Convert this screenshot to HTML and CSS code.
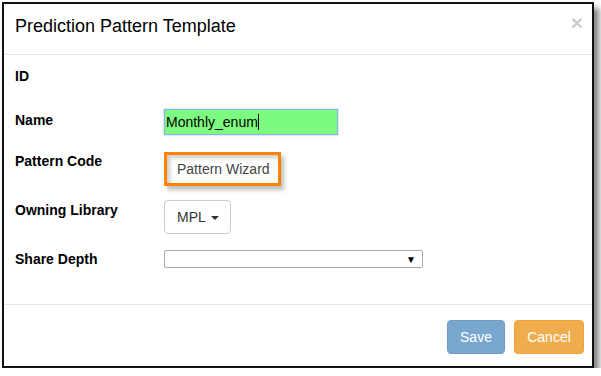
FILE: index.html
```html
<!DOCTYPE html>
<html lang="en">
<head>
    <meta charset="UTF-8">
    <title>Prediction Pattern Template</title>
    <link rel="stylesheet" href="styles.css">
</head>
<body>
    <div class="modal">
        <div class="modal-header">
            <h4 class="modal-title">Prediction Pattern Template</h4>
            <span class="close">&times;</span>
        </div>
        <div class="modal-body">
            <div class="form-row row-id">
                <label>ID</label>
            </div>
            <div class="form-row row-name">
                <label>Name</label>
                <div class="name-input">Monthly_enum<span class="caret-line"></span></div>
            </div>
            <div class="form-row row-code">
                <label>Pattern Code</label>
                <button class="wizard-btn">Pattern Wizard</button>
            </div>
            <div class="form-row row-lib">
                <label>Owning Library</label>
                <button class="lib-btn">MPL <span class="caret"></span></button>
            </div>
            <div class="form-row row-depth">
                <label>Share Depth</label>
                <div class="depth-select"><span class="arrow">&#9660;</span></div>
            </div>
        </div>
        <div class="modal-footer">
            <button class="btn btn-save">Save</button>
            <button class="btn btn-cancel">Cancel</button>
        </div>
    </div>
</body>
</html>
```

FILE: styles.css
```css
* {
    box-sizing: border-box;
}

body {
    margin: 0;
    background: #fff;
    font-family: 'Liberation Sans', Arial, sans-serif;
    font-size: 14px;
    color: #000;
}

.modal {
    margin: 2px 0 0 2px;
    width: 592px;
    height: 366px;
    border: 2px solid #111;
    background: #fff;
    box-shadow: 5px 6px 6px rgba(0, 0, 0, 0.5);
    display: flex;
    flex-direction: column;
}

.modal-header {
    height: 51px;
    border-bottom: 1px solid #e5e5e5;
    display: flex;
    justify-content: space-between;
    align-items: flex-start;
    padding: 11px 9px 0 11px;
}

.modal-title {
    margin: 0;
    font-size: 18px;
    font-weight: normal;
    line-height: 22px;
}

.close {
    font-size: 21px;
    font-weight: bold;
    line-height: 16px;
    color: #000;
    opacity: 0.2;
}

.modal-body {
    flex: 1;
    padding: 12px 0 0 11px;
}

.form-row {
    display: flex;
    align-items: flex-start;
}

.form-row label {
    width: 149px;
    font-weight: bold;
    line-height: 18px;
}

.row-id { height: 42px; }
.row-name { height: 43px; }
.row-code { height: 48px; }
.row-lib { height: 50px; }
.row-depth { height: 18px; }

.row-name label { padding-top: 2px; }
.row-lib label { padding-top: 1px; }

.name-input {
    width: 174px;
    height: 26px;
    border: 1px solid #8bb0ec;
    box-shadow: 0 0 2px rgba(102, 150, 233, 0.6);
    background: #7dfb80;
    padding: 3px 1px;
    line-height: 18px;
    font-size: 14px;
}

.caret-line {
    display: inline-block;
    width: 1px;
    height: 16px;
    background: #000;
    vertical-align: -3px;
}

.wizard-btn {
    width: 117px;
    height: 34px;
    border: 3px solid #ff8300;
    background: #fff;
    box-shadow: inset 3px 3px 4px rgba(0, 0, 0, 0.2), 3px 4px 4px rgba(0, 0, 0, 0.25);
    font-family: inherit;
    font-size: 14px;
    color: #444;
    padding: 0 0 0 10px;
    text-align: left;
}

.lib-btn {
    width: 67px;
    height: 34px;
    border: 1px solid #ccc;
    border-radius: 4px;
    background: #fff;
    font-family: inherit;
    font-size: 14px;
    color: #333;
    padding: 0 0 0 12px;
    text-align: left;
}

.caret {
    display: inline-block;
    width: 0;
    height: 0;
    margin-left: 2px;
    border-top: 4px solid #333;
    border-left: 4px solid transparent;
    border-right: 4px solid transparent;
    vertical-align: middle;
}

.depth-select {
    width: 259px;
    height: 18px;
    border: 1px solid #a9a9a9;
    border-radius: 2px;
    display: flex;
    justify-content: flex-end;
    align-items: center;
    padding-right: 6px;
}

.arrow {
    font-size: 10px;
    color: #000;
}

.modal-footer {
    height: 62px;
    border-top: 1px solid #e5e5e5;
    display: flex;
    justify-content: flex-end;
    align-items: flex-start;
    padding: 15px 8px 0 0;
    gap: 9px;
}

.btn {
    height: 34px;
    padding: 6px 12px;
    font-family: inherit;
    font-size: 14px;
    line-height: 20px;
    color: #fff;
    border-radius: 4px;
    border: 1px solid transparent;
}

.btn-save {
    width: 58px;
    background: #7aa7d0;
    border-color: #6f9ac4;
}

.btn-cancel {
    width: 70px;
    background: #f0ad4e;
    border-color: #eea236;
}
```
